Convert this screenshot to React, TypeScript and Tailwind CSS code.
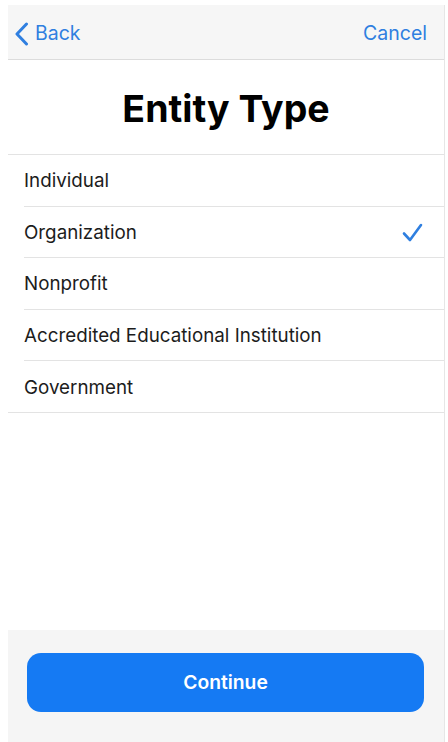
import React from "react";

const items = [
  { label: "Individual", checked: false },
  { label: "Organization", checked: true },
  { label: "Nonprofit", checked: false },
  { label: "Accredited Educational Institution", checked: false },
  { label: "Government", checked: false },
];

export default function App() {
  return (
    <div
      className="w-[448px] h-[742px] bg-white pl-[8px] pt-[5px] pr-[3px] flex flex-col overflow-hidden"
      style={{ fontFamily: "Inter, 'Liberation Sans', sans-serif" }}
    >
      <div className="flex-1 flex flex-col border-r border-[#e6e6e6]">
        <div className="h-[55px] bg-[#f6f6f6] border-b border-[#dcdcdc] flex items-center justify-between pl-[6px] pr-[17px] pt-[3px]">
          <div className="flex items-center text-[#2f7fe0] text-[19.5px]">
            <svg width="16" height="24" viewBox="0 0 16 24" className="mr-[5px]">
              <path d="M12.5 2 L3 12 L12.5 22" fill="none" stroke="#2f7fe0" strokeWidth="3" strokeLinecap="round" strokeLinejoin="round" />
            </svg>
            <span>Back</span>
          </div>
          <span className="text-[#2f7fe0] text-[19.5px]">Cancel</span>
        </div>
        <div className="h-[95px] flex items-center justify-center border-b border-[#e3e3e3] pt-[5px]">
          <h1 className="text-[37.5px] font-bold text-black">Entity Type</h1>
        </div>
        <div className="flex flex-col">
          {items.map((it, i) => (
            <div key={it.label} className="pl-[16px]">
              <div
                className={`h-[51.6px] flex items-center justify-between pr-[21px] pt-[2px] border-b border-[#e3e3e3] ${
                  i === items.length - 1 ? "-ml-[16px] pl-[16px]" : ""
                }`}
              >
                <span className="text-[18.8px] text-[#1c1c1c]">{it.label}</span>
                {it.checked && (
                  <svg width="21" height="19" viewBox="0 0 21 19">
                    <path d="M2 10.5 L8 17 L19 2" fill="none" stroke="#2f7fe0" strokeWidth="2.6" strokeLinecap="round" strokeLinejoin="round" />
                  </svg>
                )}
              </div>
            </div>
          ))}
        </div>
        <div className="flex-1" />
        <div className="h-[112px] bg-[#f5f5f5] pt-[23px] pl-[19px] pr-[20px]">
          <div className="h-[59px] rounded-[14px] bg-[#157af3] flex items-center justify-center text-white text-[19.3px] font-semibold">
            Continue
          </div>
        </div>
      </div>
    </div>
  );
}
